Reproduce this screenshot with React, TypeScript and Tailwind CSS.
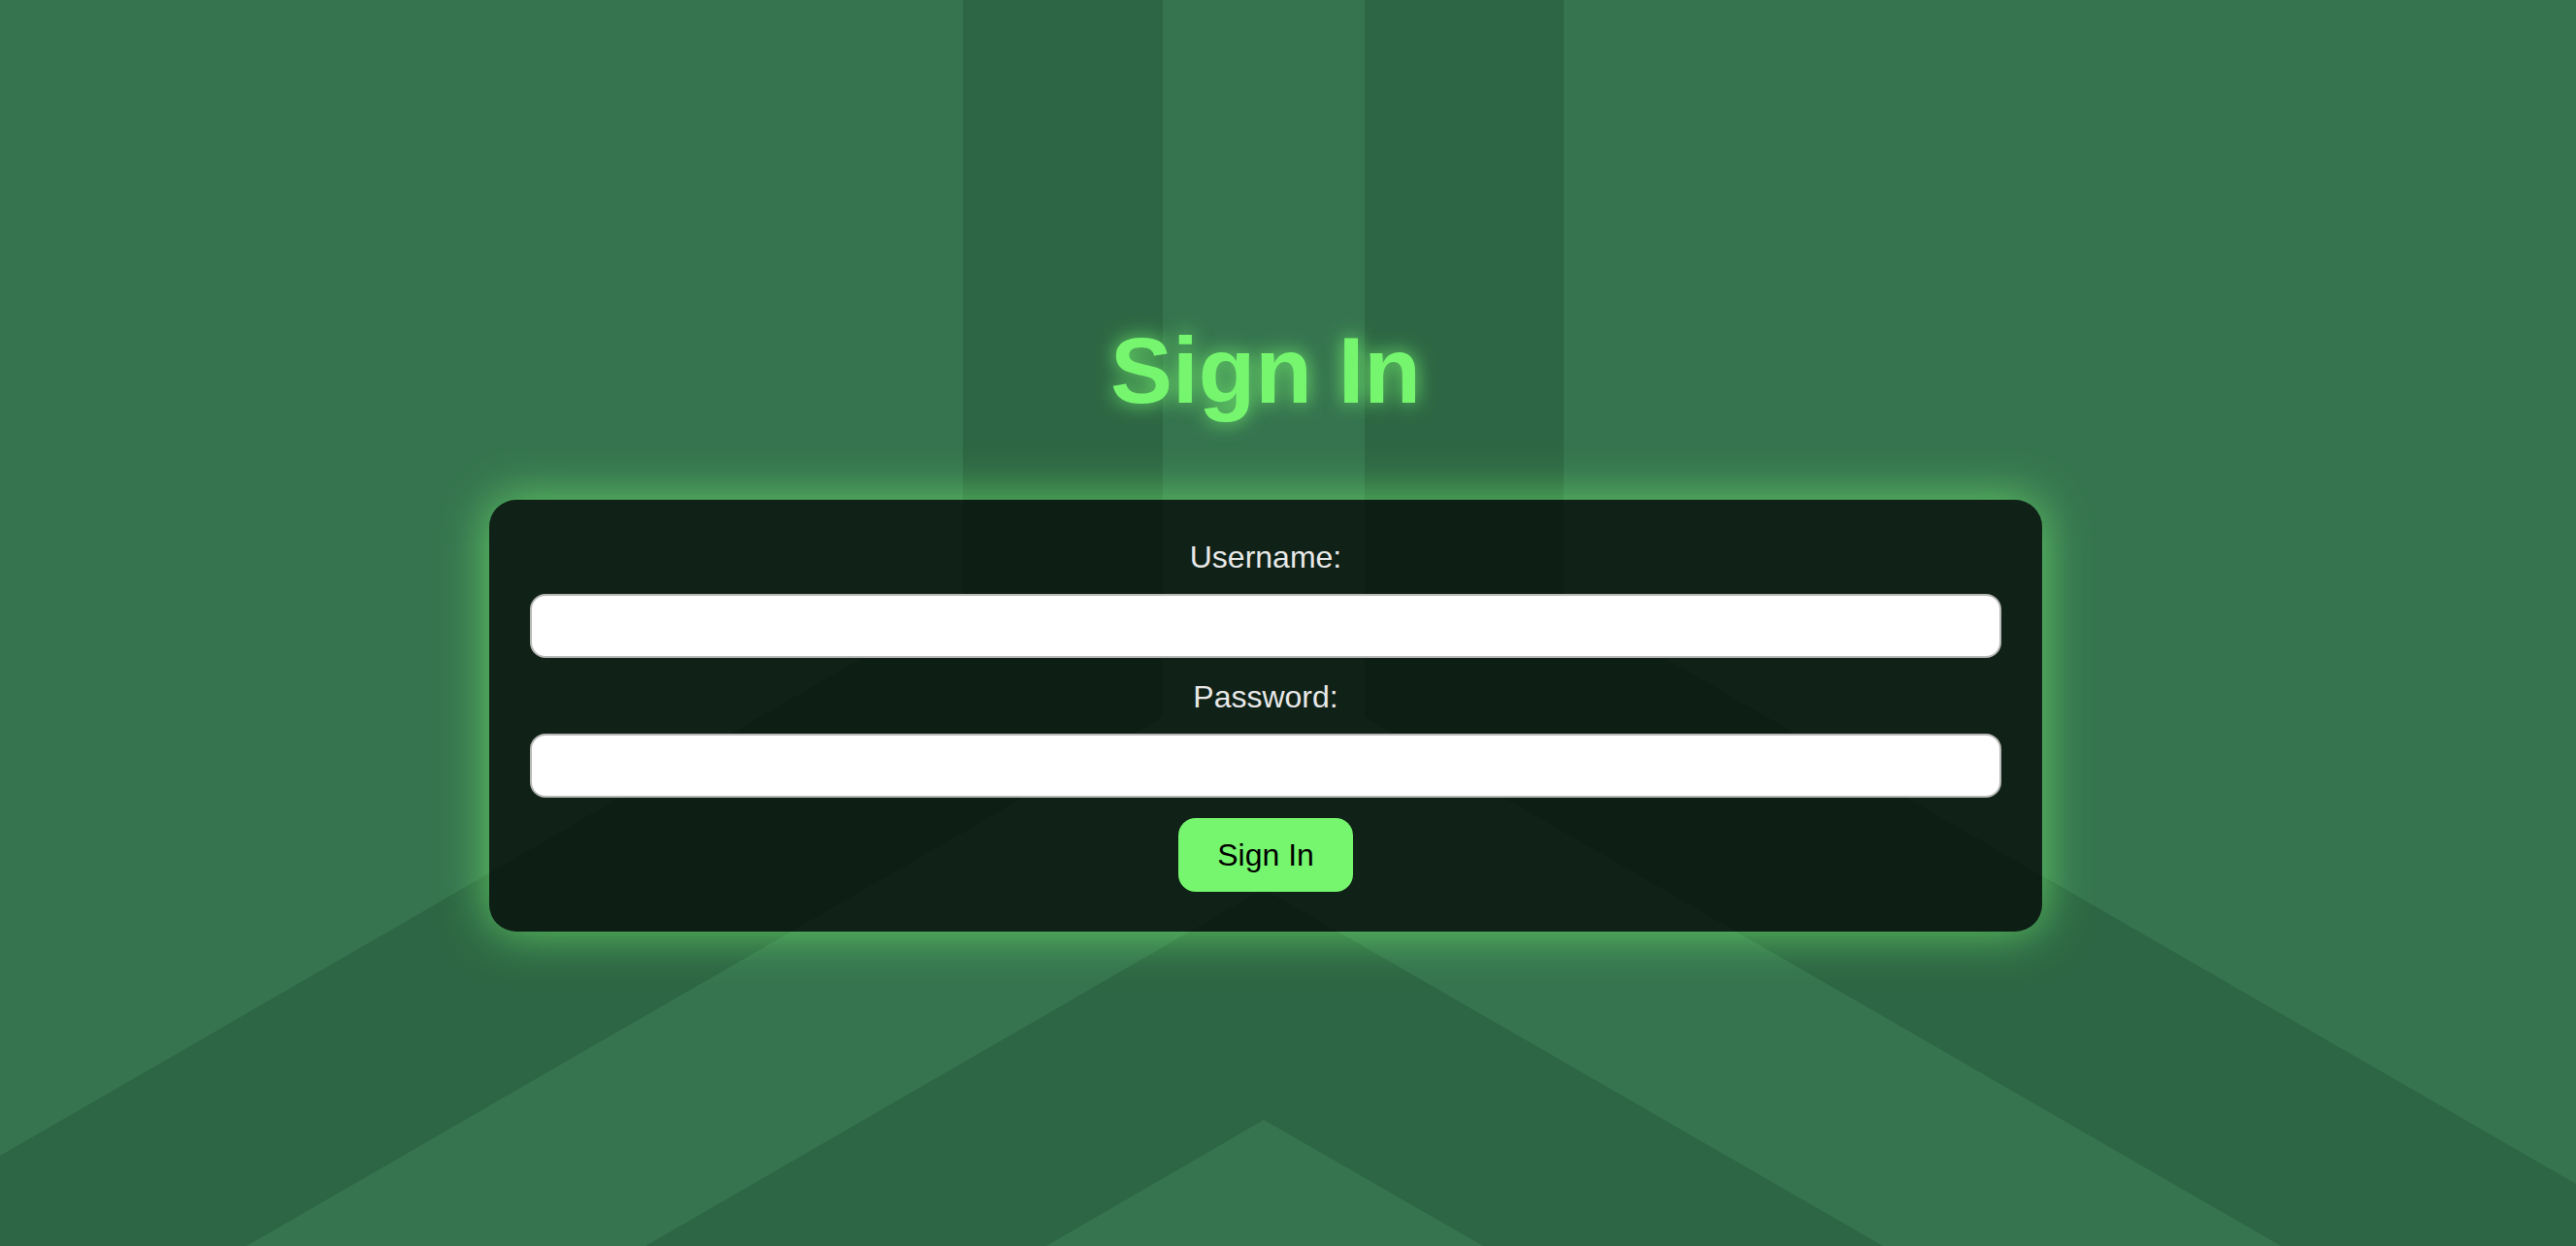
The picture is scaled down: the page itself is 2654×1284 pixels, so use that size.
const Backdrop = () => (
  <svg
    className="absolute inset-0 h-full w-full"
    viewBox="0 0 2654 1284"
    preserveAspectRatio="none"
    aria-hidden="true"
  >
    <rect width="2654" height="1284" fill="#36744f" />
    {/* left band: straight down, then bends off to the bottom-left */}
    <polygon
      fill="#2d6644"
      points="992,0 1198,0 1198,739 254,1284 0,1284 0,1191 992,618"
    />
    {/* right band, mirrored */}
    <polygon
      fill="#2d6644"
      points="1406,0 1611,0 1611,618 2654,1220 2654,1284 2350,1284 1406,739"
    />
    {/* inner chevron */}
    <polygon
      fill="#2d6644"
      points="665,1284 1302,916 1940,1284 1528,1284 1302,1154 1078,1284"
    />
  </svg>
);

const App = () => {
  return (
    <div className="relative h-screen w-full overflow-hidden font-['Liberation_Sans',Arial,sans-serif]">
      <Backdrop />
      <div className="relative flex h-full flex-col items-center justify-center pt-[2px] pr-[46px]">
        <h1 className="h-[110px] text-[96px] font-bold leading-[110px] text-[#76f66f] [text-shadow:0_0_20px_rgba(118,246,111,0.9)]">
          Sign In
        </h1>
        <form
          className="mt-[78px] flex w-[1600px] flex-col items-center rounded-[28px] bg-black/70 px-[42px] pt-[41px] pb-[41px] shadow-[0_0_50px_rgba(118,246,111,0.7)]"
          onSubmit={(e) => e.preventDefault()}
        >
          <label
            htmlFor="username"
            className="h-[36px] text-[32px] leading-[36px] text-[#e8e8e8]"
          >
            Username:
          </label>
          <input
            id="username"
            type="text"
            className="mt-[20px] h-[66px] w-full rounded-[16px] border-2 border-[#b8b8b8] bg-white px-4 text-[28px] outline-none"
          />
          <label
            htmlFor="password"
            className="mt-[22px] h-[36px] text-[32px] leading-[36px] text-[#e8e8e8]"
          >
            Password:
          </label>
          <input
            id="password"
            type="password"
            className="mt-[20px] h-[66px] w-full rounded-[16px] border-2 border-[#b8b8b8] bg-white px-4 text-[28px] outline-none"
          />
          <button
            type="submit"
            className="mt-[21px] h-[76px] rounded-[18px] bg-[#76f66f] px-[40px] text-[32px] leading-[36px] text-black"
          >
            Sign In
          </button>
        </form>
      </div>
    </div>
  );
};

export default App;
